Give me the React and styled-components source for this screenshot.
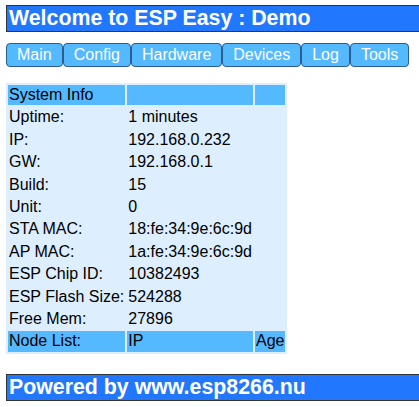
import styled, { createGlobalStyle } from "styled-components";

const GlobalStyle = createGlobalStyle`
  html, body {
    margin: 0;
    padding: 0;
    overflow: hidden;
    background: #ffffff;
  }
  * {
    font-family: "Liberation Sans", Arial, sans-serif;
    font-size: 16px;
  }
`;

const menu = ["Main", "Config", "Hardware", "Devices", "Log", "Tools"];

const info = [
  ["Uptime:", "1 minutes"],
  ["IP:", "192.168.0.232"],
  ["GW:", "192.168.0.1"],
  ["Build:", "15"],
  ["Unit:", "0"],
  ["STA MAC:", "18:fe:34:9e:6c:9d"],
  ["AP MAC:", "1a:fe:34:9e:6c:9d"],
  ["ESP Chip ID:", "10382493"],
  ["ESP Flash Size:", "524288"],
  ["Free Mem:", "27896"],
];

export default function App() {
  return (
    <Page>
      <GlobalStyle />
      <Banner>Welcome to ESP Easy : Demo</Banner>

      <Menu>
        {menu.map((m) => (
          <MenuButton key={m} href="#">
            {m}
          </MenuButton>
        ))}
      </Menu>

      <InfoTable cellSpacing={2} cellPadding={1}>
        <tbody>
          <tr>
            <HeadCell>System Info</HeadCell>
            <HeadCell />
            <HeadCell />
          </tr>
          {info.map(([label, value]) => (
            <tr key={label}>
              <Cell>{label}</Cell>
              <Cell>{value}</Cell>
              <Cell />
            </tr>
          ))}
          <tr>
            <HeadCell>Node List:</HeadCell>
            <HeadCell>IP</HeadCell>
            <HeadCell>Age</HeadCell>
          </tr>
        </tbody>
      </InfoTable>

      <Banner>Powered by www.esp8266.nu</Banner>
    </Page>
  );
}

const Page = styled.div`
  display: flex;
  flex-direction: column;
  align-items: flex-start;
  padding: 5px 0 0 6px;
`;

const Banner = styled.div`
  width: 430px;
  box-sizing: border-box;
  padding: 0 2px;
  border: 1px solid #333333;
  background-color: #2277ff;
  color: #ffffff;
  font-size: 21.33px;
  font-weight: bold;
  line-height: 25px;
`;

const Menu = styled.div`
  display: flex;
  margin: 11px 0 16px 0;
`;

const MenuButton = styled.a`
  display: block;
  padding: 2px 10px;
  border: 1px solid #2b5d8f;
  border-radius: 4px;
  background-color: #55b9ff;
  color: #ffffff;
  text-decoration: none;
  line-height: 18px;
`;

const InfoTable = styled.table`
  background-color: #ddeeff;
  color: #000000;
  margin-bottom: 20px;
  border-collapse: separate;
`;

const HeadCell = styled.td`
  background-color: #55b9ff;
  text-align: left;
  padding: 1px;
  height: 18.4px;
  line-height: 18.4px;
  white-space: nowrap;
`;

const Cell = styled.td`
  padding: 1px;
  line-height: 18.4px;
  white-space: nowrap;
`;
